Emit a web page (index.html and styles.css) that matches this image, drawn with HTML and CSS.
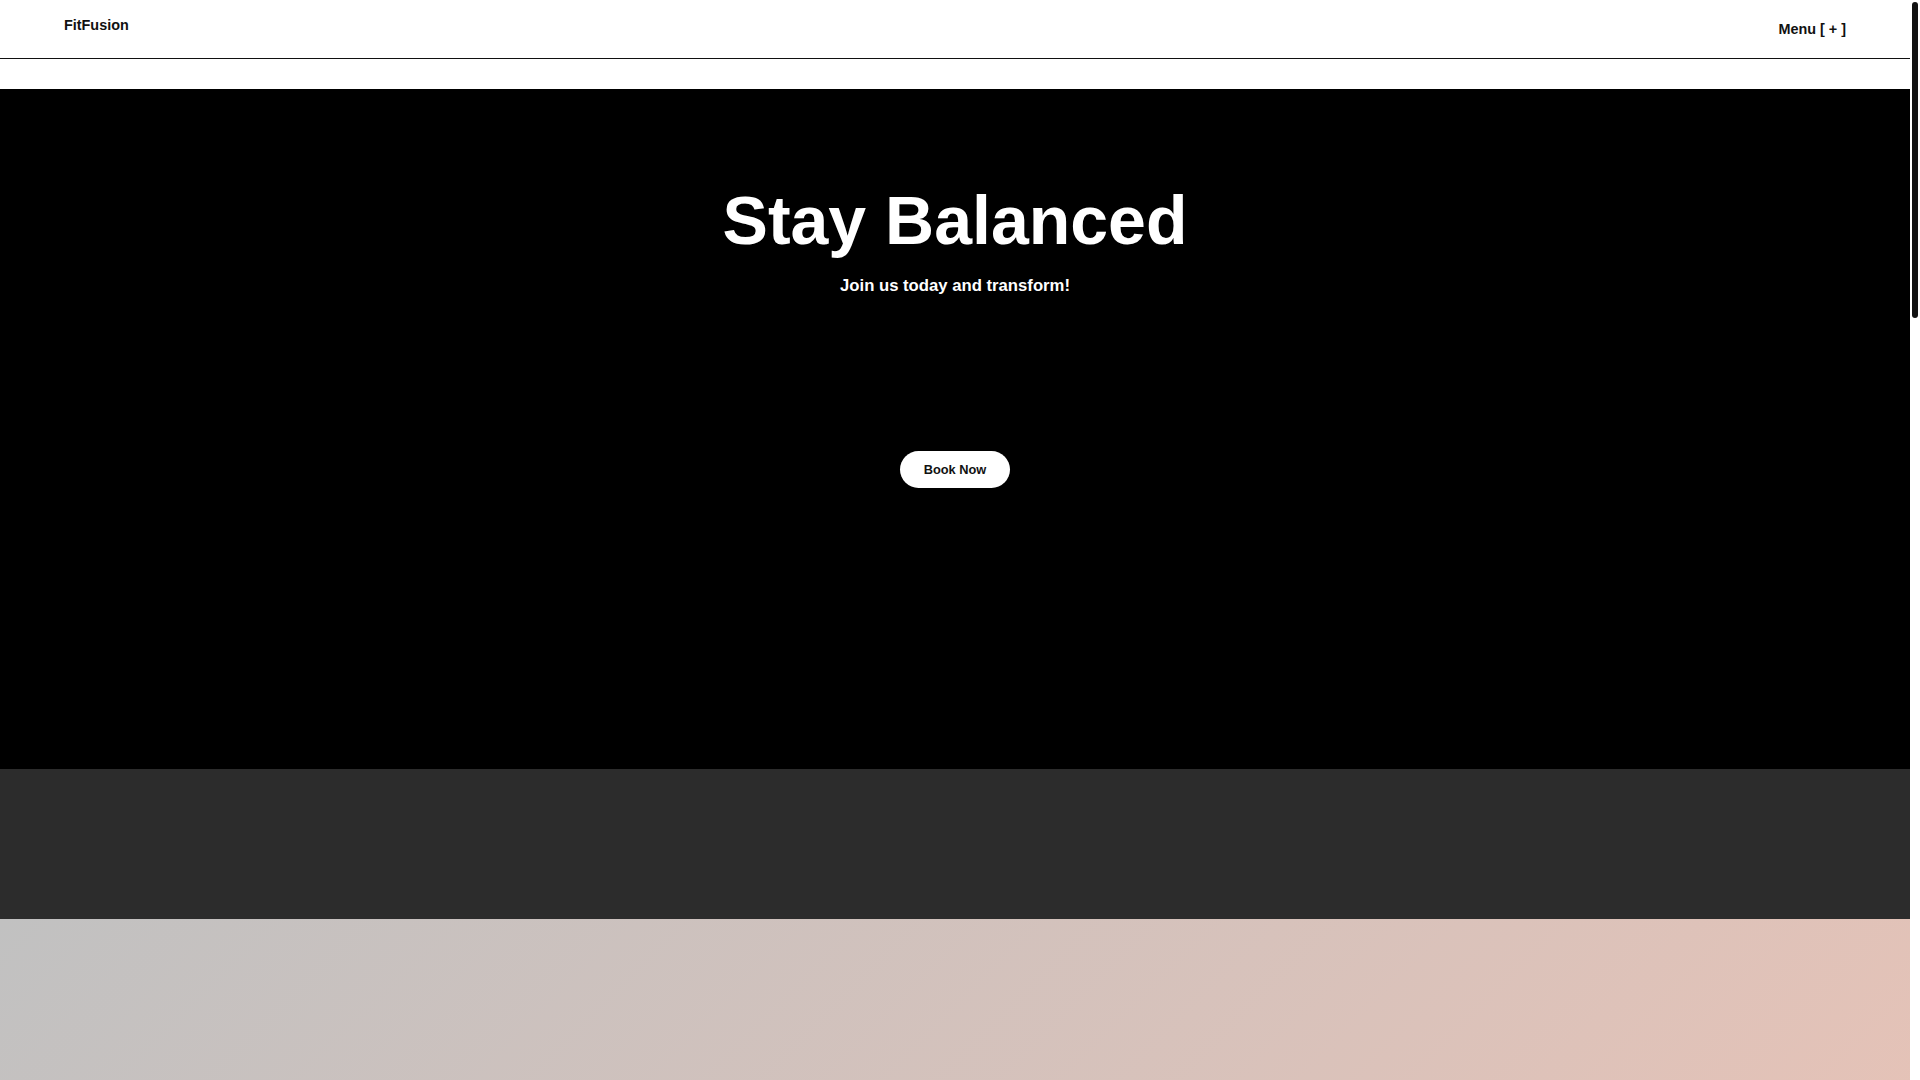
FILE: index.html
```html
<!DOCTYPE html>
<html lang="en">
<head>
<meta charset="utf-8">
<title>FitFusion</title>
<link rel="stylesheet" href="styles.css">
</head>
<body>
<div class="page">
  <header class="site-header">
    <div class="logo">FitFusion</div>
    <button class="menu-toggle" type="button">Menu [ + ]</button>
  </header>
  <main>
    <section class="hero">
      <h1 class="hero-title">Stay Balanced</h1>
      <p class="hero-sub">Join us today and transform!</p>
      <button class="btn-book" type="button">Book Now</button>
    </section>
    <section class="band"></section>
    <section class="gradient"></section>
    <section class="filler"></section>
  </main>
</div>
<div class="scroll-rail" aria-hidden="true"><div class="scroll-thumb"></div></div>
</body>
</html>
```
FILE: styles.css
```css
html, body {
  margin: 0;
  padding: 0;
}
body {
  font-family: "Liberation Sans", Arial, sans-serif;
  background: #ffffff;
  color: #111111;
}
.page {
  margin-right: 10px;
}
.scroll-rail {
  position: fixed;
  top: 0;
  right: 0;
  width: 10px;
  height: 100vh;
  background: #ffffff;
}
.scroll-thumb {
  margin: 2px 2px 0;
  height: 316px;
  border-radius: 4px;
  background: #111111;
}
.site-header {
  box-sizing: border-box;
  height: 59px;
  padding: 17px 64px 0;
  display: flex;
  justify-content: space-between;
  align-items: flex-start;
  border-bottom: 1px solid #111111;
  background: #ffffff;
}
.logo {
  font-size: 14.4px;
  font-weight: 700;
  line-height: normal;
}
.menu-toggle {
  margin: 4px 0 0;
  padding: 0;
  border: 0;
  background: none;
  font-family: inherit;
  font-size: 14.4px;
  font-weight: 700;
  line-height: normal;
  color: #111111;
  cursor: pointer;
}
.hero {
  box-sizing: border-box;
  margin-top: 30px;
  height: 680px;
  padding-top: 92px;
  background: #000000;
  color: #ffffff;
  display: flex;
  flex-direction: column;
  align-items: center;
  text-align: center;
}
.hero-title {
  margin: 0 0 16.5px;
  font-size: 68px;
  font-weight: 700;
  line-height: normal;
}
.hero-sub {
  margin: 0;
  font-size: 16.7px;
  font-weight: 700;
  line-height: normal;
}
.btn-book {
  margin-top: 155px;
  padding: 11.2px 24px;
  border: 0;
  border-radius: 999px;
  background: #ffffff;
  color: #111111;
  font-family: inherit;
  font-size: 12.8px;
  font-weight: 700;
  line-height: normal;
  cursor: pointer;
}
.band {
  height: 150px;
  background: #2c2c2c;
}
.gradient {
  height: 1080px;
  background: linear-gradient(135deg, #c1c1c1, #f4c3b3);
}
.filler {
  height: 1646px;
  background: #ffffff;
}
```
